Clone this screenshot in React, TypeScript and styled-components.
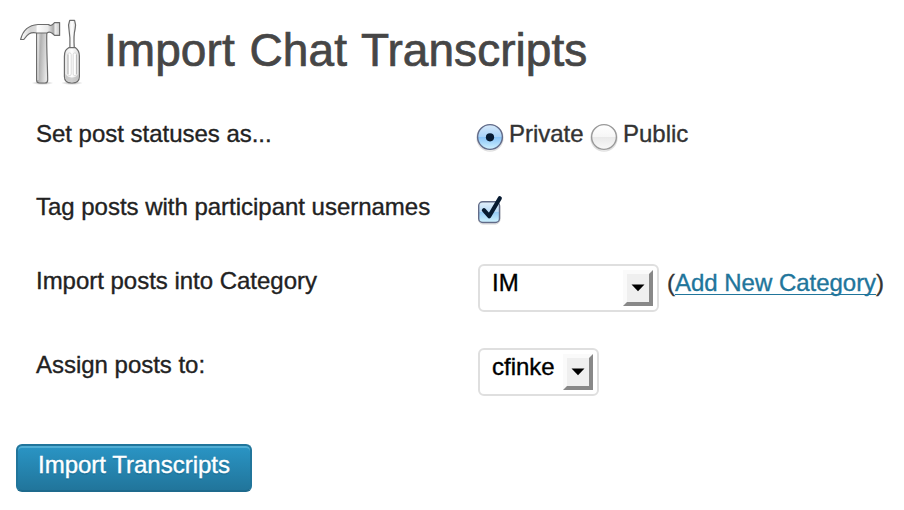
import React from "react";
import styled, { createGlobalStyle } from "styled-components";

const GlobalStyle = createGlobalStyle`
  * { box-sizing: border-box; }
  body { margin: 0; background: #fff; }
`;

const Page = styled.main`
  width: 904px;
  height: 510px;
  padding-left: 16px;
  overflow: hidden;
  background: #fff;
  color: #222;
  font: 24px/28px "Liberation Sans", Arial, sans-serif;
  letter-spacing: -0.02px;
  white-space: nowrap;
  -webkit-text-stroke: 0.35px currentColor;
`;

const Header = styled.header`
  display: flex;
  height: 108px;
`;

const ToolsIcon = styled.svg`
  display: block;
  width: 72px;
  height: 80px;
  margin-top: 10px;
`;

const Title = styled.h1`
  margin: 22px 0 0 16px;
  color: #464646;
  font-size: 46px;
  font-weight: 400;
  line-height: 56px;
  letter-spacing: 0.06px;
  word-spacing: 2px;
  -webkit-text-stroke-width: 0.7px;
`;

const Row = styled.div<{ $height: number }>`
  display: grid;
  grid-template-columns: 442px 1fr;
  height: ${(p) => p.$height}px;
  padding-left: 20px;
`;

const Label = styled.div`
  padding-top: 12px;
`;

const Controls = styled.div<{ $top: number }>`
  display: flex;
  align-items: flex-start;
  padding-top: ${(p) => p.$top}px;
`;

const Option = styled.label<{ $width: number }>`
  display: flex;
  width: ${(p) => p.$width}px;
  color: #333;
`;

const RadioMark = styled.svg`
  display: block;
  flex: none;
  width: 30px;
  height: 32px;
  margin: 2px 3px 0 -2px;
`;

const CheckMark = styled.svg`
  display: block;
  width: 30px;
  height: 34px;
  margin-left: -2px;
`;

const SelectBox = styled.div<{ $width: number }>`
  display: flex;
  justify-content: space-between;
  width: ${(p) => p.$width}px;
  height: 48px;
  padding: 4px 4px 4px 12px;
  border: 2px solid #dfdfdf;
  border-radius: 6px;
  background: #fff;
  color: #000;
`;

const SelectValue = styled.span`
  margin-top: -1px;
`;

const DropButton = styled.span`
  display: flex;
  align-items: center;
  justify-content: center;
  width: 30px;
  height: 36px;
  border: 4px solid;
  border-color: #fafafa #888 #888 #fafafa;
  background: #efefef;
`;

const Aside = styled.span`
  margin: 5px 0 0 8px;
  color: #333;
`;

const Link = styled.a`
  color: #21759b;
  text-decoration: underline;
  text-decoration-thickness: 1px;
  text-underline-offset: 3px;
  text-decoration-skip-ink: none;
`;

const Submit = styled.button`
  display: block;
  width: 236px;
  height: 48px;
  margin-top: 21px;
  padding: 0 0 6px;
  border: 2px solid #21759b;
  border-bottom-color: #1e6a8d;
  border-radius: 6px;
  background: linear-gradient(#2a95c5, #21759b);
  box-shadow: inset 0 2px 0 rgba(120, 200, 230, 0.5);
  color: #fff;
  font: inherit;
  text-shadow: 0 2px 0 rgba(0, 0, 0, 0.1);
`;

function Tools() {
  return (
    <ToolsIcon viewBox="16 10 72 80" aria-hidden="true">
      <defs>
        <linearGradient id="handle" x1="0" x2="1" y2="0.25">
          <stop offset="0" stopColor="#f2f2f2" />
          <stop offset="0.4" stopColor="#b2b2b2" />
          <stop offset="1" stopColor="#e6e6e6" />
        </linearGradient>
        <linearGradient id="head" x2="1">
          <stop offset="0" stopColor="#fff" />
          <stop offset="0.25" stopColor="#d5d5d5" />
          <stop offset="0.4" stopColor="#ddd" />
          <stop offset="0.42" stopColor="#fff" />
          <stop offset="0.7" stopColor="#e8e8e8" />
          <stop offset="0.84" stopColor="#aaa" />
          <stop offset="0.89" stopColor="#eee" />
          <stop offset="1" stopColor="#c8c8c8" />
        </linearGradient>
        <linearGradient id="grip" x2="1">
          <stop offset="0" stopColor="#e4e4e4" />
          <stop offset="0.5" stopColor="#fff" />
          <stop offset="1" stopColor="#d8d8d8" />
        </linearGradient>
        <radialGradient id="floor">
          <stop offset="0" stopColor="#777" stopOpacity="0.6" />
          <stop offset="1" stopColor="#777" stopOpacity="0" />
        </radialGradient>
      </defs>
      <ellipse cx="42.5" cy="83" rx="11" ry="2" fill="url(#floor)" />
      <ellipse cx="72" cy="83" rx="11" ry="2" fill="url(#floor)" />
      <g stroke="#6c6c6c" strokeWidth="1.2" strokeLinejoin="round">
        <path d="M36.6 32H46.8C46.3 48 47.6 66 47.7 80Q47.7 83 45 83H39.3Q36.6 83 36.6 80Z" fill="url(#handle)" />
        <path d="M20.6 39.5C22.8 30.5 28 25.2 38 24.5H48.5C50 26 51.5 25.7 53 24.1L54.5 22.6H59.6V35.4H54.5L52.5 33.5C51 32.3 48.5 31.8 47 33H36.7C30.5 31.6 27.3 34.3 23.8 39.5Z" fill="url(#head)" />
        <path d="M69.9 48C70.3 40 69.8 34 68.9 28.5C68 24.7 68.8 22.7 69.7 20.4H74.6C75.7 23.5 76.2 25.5 75.1 29C73.8 34 73.8 41 74.3 48Z" fill="url(#grip)" />
        <path d="M64.4 56.5C64.4 50.5 66.2 49.5 68.7 47.7H75.5C78 49.5 79.4 51 79.4 56V76.5C79.4 80.7 76.8 83 72 83S64.4 80.7 64.4 76.5Z" fill="url(#grip)" />
      </g>
      <path d="M65.3 74Q68 77.5 72 77.5Q76 77.5 78.6 74V77.5Q77.5 82.2 72 82.2Q66.5 82.2 65.3 77.5Z" fill="#aaa" opacity="0.55" />
      <g fill="#fff" stroke="#cdcdcd" strokeWidth="0.7">
        <rect x="67.9" y="53" width="3.3" height="22.5" rx="1.4" />
        <rect x="73.2" y="53" width="3.3" height="22.5" rx="1.4" />
      </g>
      <path d="M68 54.5V74M76.4 54.5V74" stroke="#b2b2b2" strokeWidth="0.9" />
      <path d="M38 34.5V80" stroke="#fff" strokeWidth="0.8" opacity="0.7" />
    </ToolsIcon>
  );
}

function Radio({ checked = false }: { checked?: boolean }) {
  const id = checked ? "radio-on" : "radio-off";
  return (
    <RadioMark viewBox="0 0 30 32" role="radio" aria-checked={checked}>
      <defs>
        <linearGradient id={id} x2="0" y2="1">
          <stop offset="0" stopColor={checked ? "#d6e9fa" : "#fff"} />
          <stop offset="0.5" stopColor={checked ? "#a9d2f7" : "#f6f6f6"} />
          <stop offset="0.52" stopColor={checked ? "#8ac4f7" : "#e9e9e9"} />
          <stop offset="1" stopColor={checked ? "#d0f2ff" : "#fafafa"} />
        </linearGradient>
      </defs>
      <circle cx="14" cy="16" r="13" fill="none" stroke="#bbb" strokeOpacity="0.45" strokeWidth="1.4" />
      <circle cx="14" cy="15" r="12.4" fill={`url(#${id})`} stroke={checked ? "#616a88" : "#999"} strokeWidth="1.4" />
      {checked && <circle cx="14" cy="15.3" r="4.1" fill="#071a31" />}
    </RadioMark>
  );
}

function Checkbox() {
  return (
    <CheckMark viewBox="476 194 30 34" role="checkbox" aria-checked="true">
      <defs>
        <linearGradient id="check-fill" x2="0" y2="1">
          <stop offset="0" stopColor="#e3f0fb" />
          <stop offset="0.48" stopColor="#b8daf8" />
          <stop offset="0.5" stopColor="#94caf6" />
          <stop offset="1" stopColor="#d0f3ff" />
        </linearGradient>
      </defs>
      <rect x="478.5" y="202.5" width="21.5" height="21.5" rx="4.5" fill="none" stroke="#aaa" strokeOpacity="0.5" />
      <rect x="478.7" y="201.7" width="20.8" height="20.8" rx="4" fill="url(#check-fill)" stroke="#626b88" strokeWidth="1.4" />
      <path d="M483.9 210.2L489.2 216.2L499.8 198.3" fill="none" stroke="#071a31" strokeWidth="4.2" strokeLinecap="round" strokeLinejoin="round" />
    </CheckMark>
  );
}

function Select({ value, width }: { value: string; width: number }) {
  return (
    <SelectBox $width={width} role="combobox">
      <SelectValue>{value}</SelectValue>
      <DropButton>
        <svg width="14" height="8" viewBox="0 0 14 8">
          <path d="M0.5 0.5H13.5L7 7.3Z" fill="#000" />
        </svg>
      </DropButton>
    </SelectBox>
  );
}

export default function App() {
  return (
    <>
      <GlobalStyle />
      <Page>
        <Header>
          <Tools />
          <Title>Import Chat Transcripts</Title>
        </Header>
        <Row $height={73}>
          <Label>Set post statuses as...</Label>
          <Controls $top={12}>
            <Option $width={114}><Radio checked />Private</Option>
            <Option $width={114}><Radio />Public</Option>
          </Controls>
        </Row>
        <Row $height={74}>
          <Label>Tag posts with participant usernames</Label>
          <Controls $top={13}><Checkbox /></Controls>
        </Row>
        <Row $height={84}>
          <Label>Import posts into Category</Label>
          <Controls $top={9}>
            <Select value="IM" width={181} />
            <Aside>(<Link>Add New Category</Link>)</Aside>
          </Controls>
        </Row>
        <Row $height={84}>
          <Label>Assign posts to:</Label>
          <Controls $top={9}><Select value="cfinke" width={121} /></Controls>
        </Row>
        <Submit>Import Transcripts</Submit>
      </Page>
    </>
  );
}
